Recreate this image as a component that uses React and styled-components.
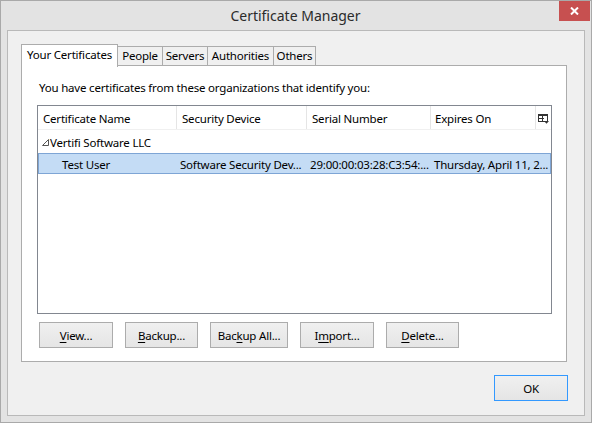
import styled, { createGlobalStyle } from "styled-components";

const GlobalStyle = createGlobalStyle`
  html, body {
    margin: 0;
    padding: 0;
    background: #e3e3e3;
  }
  * {
    box-sizing: border-box;
  }
`;

const Window = styled.div`
  width: 592px;
  height: 423px;
  border: 1px solid #a9a9a9;
  background: #e3e3e3;
  padding: 0 6px 6px 6px;
  display: flex;
  flex-direction: column;
  font-family: "Noto Sans", "Open Sans", sans-serif;
  font-size: 11.5px;
  letter-spacing: -0.2px;
  color: #000;
`;

const TitleBar = styled.div`
  height: 29px;
  display: grid;
  grid-template-columns: 1fr auto 1fr;
  align-items: start;
  margin: 0 -5px 0 -6px;
`;

const Title = styled.div`
  grid-column: 2;
  font-size: 14px;
  letter-spacing: 0;
  line-height: 29px;
  color: #2b2b2b;
`;

const CloseButton = styled.div`
  grid-column: 3;
  justify-self: end;
  width: 31px;
  height: 20px;
  background: #c75050;
  display: flex;
  align-items: center;
  justify-content: center;
`;

const Client = styled.div`
  flex: 1;
  border: 1px solid #b9b9b9;
  background: #f0f0f0;
  padding: 13px 0 0 13px;
  display: flex;
  flex-direction: column;
`;

const TabStrip = styled.div`
  display: flex;
  align-items: flex-end;
  height: 22px;
  position: relative;
  z-index: 1;
`;

const Tab = styled.div`
  width: ${({ $w }) => $w}px;
  height: ${({ $active }) => ($active ? "23px" : "20px")};
  padding-top: ${({ $active }) => ($active ? "2px" : "1px")};
  text-align: center;
  background: ${({ $active }) => ($active ? "#fff" : "#f0f0f0")};
  border: 1px solid #acacac;
  border-bottom: ${({ $active }) => ($active ? "none" : "1px solid #acacac")};
  margin-left: ${({ $first }) => ($first ? "0" : "-1px")};
  margin-bottom: ${({ $active }) => ($active ? "-1px" : "0")};
  position: relative;
  z-index: ${({ $active }) => ($active ? 2 : 1)};
  line-height: 16px;
  white-space: nowrap;
`;

const TabPanel = styled.div`
  width: 546px;
  height: 297px;
  margin-top: -1px;
  border: 1px solid #acacac;
  background: #fff;
  padding: 14px 0 0 15px;
  display: flex;
  flex-direction: column;
`;

const Intro = styled.div`
  line-height: 16px;
  padding-left: 2px;
`;

const ListView = styled.div`
  margin-top: 9px;
  width: 515px;
  height: 209px;
  border: 1px solid #828790;
  display: flex;
  flex-direction: column;
`;

const Row = styled.div`
  display: grid;
  grid-template-columns: 139px 130px 124px 105px 1fr;
  align-items: center;
  white-space: nowrap;
`;

const HeaderRow = styled(Row)`
  height: 24px;
  border-bottom: 1px solid #f0f0f0;
`;

const HeaderCell = styled.div`
  height: 100%;
  display: flex;
  align-items: center;
  padding: 2px 0 0 ${({ $pad }) => $pad ?? 5}px;
  border-right: 1px solid #e5e5e5;
  overflow: hidden;
`;

const PickerCell = styled.div`
  display: flex;
  align-items: center;
  justify-content: center;
  padding: 2px 0 0 0;
`;

const GroupRow = styled.div`
  height: 22px;
  display: flex;
  align-items: center;
  gap: 1px;
  padding: 2px 0 0 4px;
`;

const ItemRow = styled(Row)`
  height: 21px;
  margin: 1px 0 0 0;
  padding-top: 2px;
  background: ${({ $selected }) => ($selected ? "#c4dcf5" : "transparent")};
  border: 1px solid ${({ $selected }) => ($selected ? "#7ea5d5" : "transparent")};
`;

const Cell = styled.div`
  padding-left: ${({ $pad }) => $pad ?? 2}px;
  grid-column: ${({ $span }) => ($span ? `span ${$span}` : "auto")};
  overflow: hidden;
  text-overflow: ellipsis;
`;

const ButtonRow = styled.div`
  display: flex;
  gap: 12px;
  margin-top: 8px;
  padding-left: 2px;
`;

const Button = styled.div`
  width: ${({ $w }) => $w ?? 74}px;
  height: 26px;
  border: 1px solid ${({ $default }) => ($default ? "#3399ff" : "#acacac")};
  background: linear-gradient(#f0f0f0, #e5e5e5);
  display: flex;
  align-items: center;
  justify-content: center;
  white-space: nowrap;

  u {
    text-decoration-thickness: 1px;
    text-underline-offset: 2px;
  }
`;

const Footer = styled.div`
  display: flex;
  justify-content: flex-end;
  padding: 13px 16px 0 0;
`;

const GroupArrow = () => (
  <svg width="7" height="7" viewBox="0 0 7 7">
    <polygon points="0.5,6.5 6.5,0.5 6.5,6.5" fill="none" stroke="#555" strokeWidth="1" />
  </svg>
);

const ColumnPicker = () => (
  <svg width="11" height="10" viewBox="0 0 11 10">
    <rect x="0.5" y="0.5" width="9" height="7" fill="none" stroke="#333" />
    <rect x="0" y="0" width="10" height="2" fill="#333" />
    <line x1="4.5" y1="2" x2="4.5" y2="8" stroke="#333" />
    <line x1="0" y1="4.5" x2="6" y2="4.5" stroke="#333" />
    <polygon points="6,7 11,7 8.5,9.8" fill="#333" />
  </svg>
);

const tabs = [
  { label: "Your Certificates", w: 97 },
  { label: "People", w: 46 },
  { label: "Servers", w: 46 },
  { label: "Authorities", w: 67 },
  { label: "Others", w: 43 },
];

export default function App() {
  return (
    <>
      <GlobalStyle />
      <Window>
        <TitleBar>
          <Title>Certificate Manager</Title>
          <CloseButton>
            <svg width="9" height="8" viewBox="0 0 9 8">
              <path d="M1 0.5 L8 7.5 M8 0.5 L1 7.5" stroke="#fff" strokeWidth="2" />
            </svg>
          </CloseButton>
        </TitleBar>
        <Client>
          <TabStrip>
            {tabs.map((t, i) => (
              <Tab key={t.label} $w={t.w} $active={i === 0} $first={i === 0}>
                {t.label}
              </Tab>
            ))}
          </TabStrip>
          <TabPanel>
            <Intro>You have certificates from these organizations that identify you:</Intro>
            <ListView>
              <HeaderRow>
                <HeaderCell>Certificate Name</HeaderCell>
                <HeaderCell>Security Device</HeaderCell>
                <HeaderCell>Serial Number</HeaderCell>
                <HeaderCell $pad={4}>Expires On</HeaderCell>
                <PickerCell>
                  <ColumnPicker />
                </PickerCell>
              </HeaderRow>
              <GroupRow>
                <GroupArrow />
                Vertifi Software LLC
              </GroupRow>
              <ItemRow $selected>
                <Cell $pad={23}>Test User</Cell>
                <Cell>Software Security Dev...</Cell>
                <Cell>29:00:00:03:28:C3:54:...</Cell>
                <Cell $span={2}>Thursday, April 11, 2...</Cell>
              </ItemRow>
            </ListView>
            <ButtonRow>
              <Button $w={74}><span><u>V</u>iew...</span></Button>
              <Button $w={73}><span><u>B</u>ackup...</span></Button>
              <Button $w={78}><span>Bac<u>k</u>up All...</span></Button>
              <Button $w={74}><span>I<u>m</u>port...</span></Button>
              <Button $w={73}><span><u>D</u>elete...</span></Button>
            </ButtonRow>
          </TabPanel>
          <Footer>
            <Button $w={74} $default>OK</Button>
          </Footer>
        </Client>
      </Window>
    </>
  );
}
